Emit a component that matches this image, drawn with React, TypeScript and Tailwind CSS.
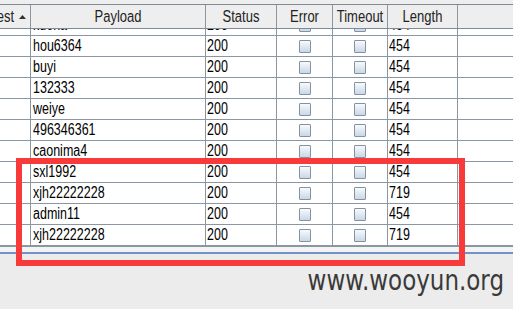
const rows = [
  { payload: 'kuona', status: '200', length: '454' },
  { payload: 'hou6364', status: '200', length: '454' },
  { payload: 'buyi', status: '200', length: '454' },
  { payload: '132333', status: '200', length: '454' },
  { payload: 'weiye', status: '200', length: '454' },
  { payload: '496346361', status: '200', length: '454' },
  { payload: 'caonima4', status: '200', length: '454' },
  { payload: 'sxl1992', status: '200', length: '454' },
  { payload: 'xjh22222228', status: '200', length: '719' },
  { payload: 'admin11', status: '200', length: '454' },
  { payload: 'xjh22222228', status: '200', length: '719' },
];

const cols = 'grid grid-cols-[31px_175px_71px_56px_55px_70px_1fr]';

function Checkbox() {
  return (
    <span className="block h-[13px] w-[12px] rounded-[1px] border border-[#8592a0] bg-linear-to-b from-[#f8fafc] to-[#c9d7e7]" />
  );
}

function Text({ children }: { children: React.ReactNode }) {
  return <span className="inline-block scale-y-[1.3] leading-none">{children}</span>;
}

export default function App() {
  return (
    <div className="relative h-[309px] w-[513px] overflow-hidden bg-[#ececec] font-['Liberation_Sans',Arial,sans-serif]">
      <div className="h-[4px] bg-[#eeeeee]" />

      <div className={`${cols} h-[25px] border-y border-[#7f8b97] bg-[#eeeeee] text-[13px] text-[#222]`}>
        <div className="flex items-center justify-end gap-[5px] overflow-hidden border-r border-[#8a96a2] pr-[4px]">
          <Text>Request</Text>
          <svg width="7" height="4" viewBox="0 0 7 4" className="shrink-0">
            <path d="M0 4 L3.5 0 L7 4 Z" fill="#333" />
          </svg>
        </div>
        <div className="flex items-center justify-center border-r border-[#8a96a2]"><Text>Payload</Text></div>
        <div className="flex items-center justify-center border-r border-[#8a96a2]"><Text>Status</Text></div>
        <div className="flex items-center justify-center border-r border-[#8a96a2]"><Text>Error</Text></div>
        <div className="flex items-center justify-center border-r border-[#8a96a2]"><Text>Timeout</Text></div>
        <div className="flex items-center justify-center border-r border-[#8a96a2]"><Text>Length</Text></div>
        <div />
      </div>

      <div className="h-[217px] overflow-hidden bg-white text-[12.5px] text-black">
        <div className="-mt-[14px]">
          {rows.map((row, i) => (
            <div key={i} className={`${cols} h-[21px]`}>
              <div className="border-r border-b border-[#8a96a2]" />
              <div className="flex items-center border-r border-b border-[#8a96a2] pl-[2px]"><Text>{row.payload}</Text></div>
              <div className="flex items-center border-r border-b border-[#8a96a2] pl-px"><Text>{row.status}</Text></div>
              <div className="flex items-center justify-center border-r border-b border-[#8a96a2]"><Checkbox /></div>
              <div className="flex items-center justify-center border-r border-b border-[#8a96a2]"><Checkbox /></div>
              <div className="flex items-center border-r border-b border-[#8a96a2] pl-px"><Text>{row.length}</Text></div>
              <div className="border-b border-[#8a96a2]" />
            </div>
          ))}
        </div>
      </div>
      <div className="h-px bg-[#8a96a2]" />
      <div className="h-[5px] bg-[#f3f3f3]" />
      <div className="h-[2px] bg-[#7393c6]" />

      <div className="flex justify-end pr-[9px] pt-[15px]">
        <span className="inline-block scale-y-[1.25] font-['DejaVu_Sans',sans-serif] text-[23px] leading-none text-[#3a3a3a]">
          www.wooyun.org
        </span>
      </div>

      <div className="absolute left-[16px] top-[158px] h-[108px] w-[449px] border-[6px] border-[#f83a3a]" />
    </div>
  );
}
